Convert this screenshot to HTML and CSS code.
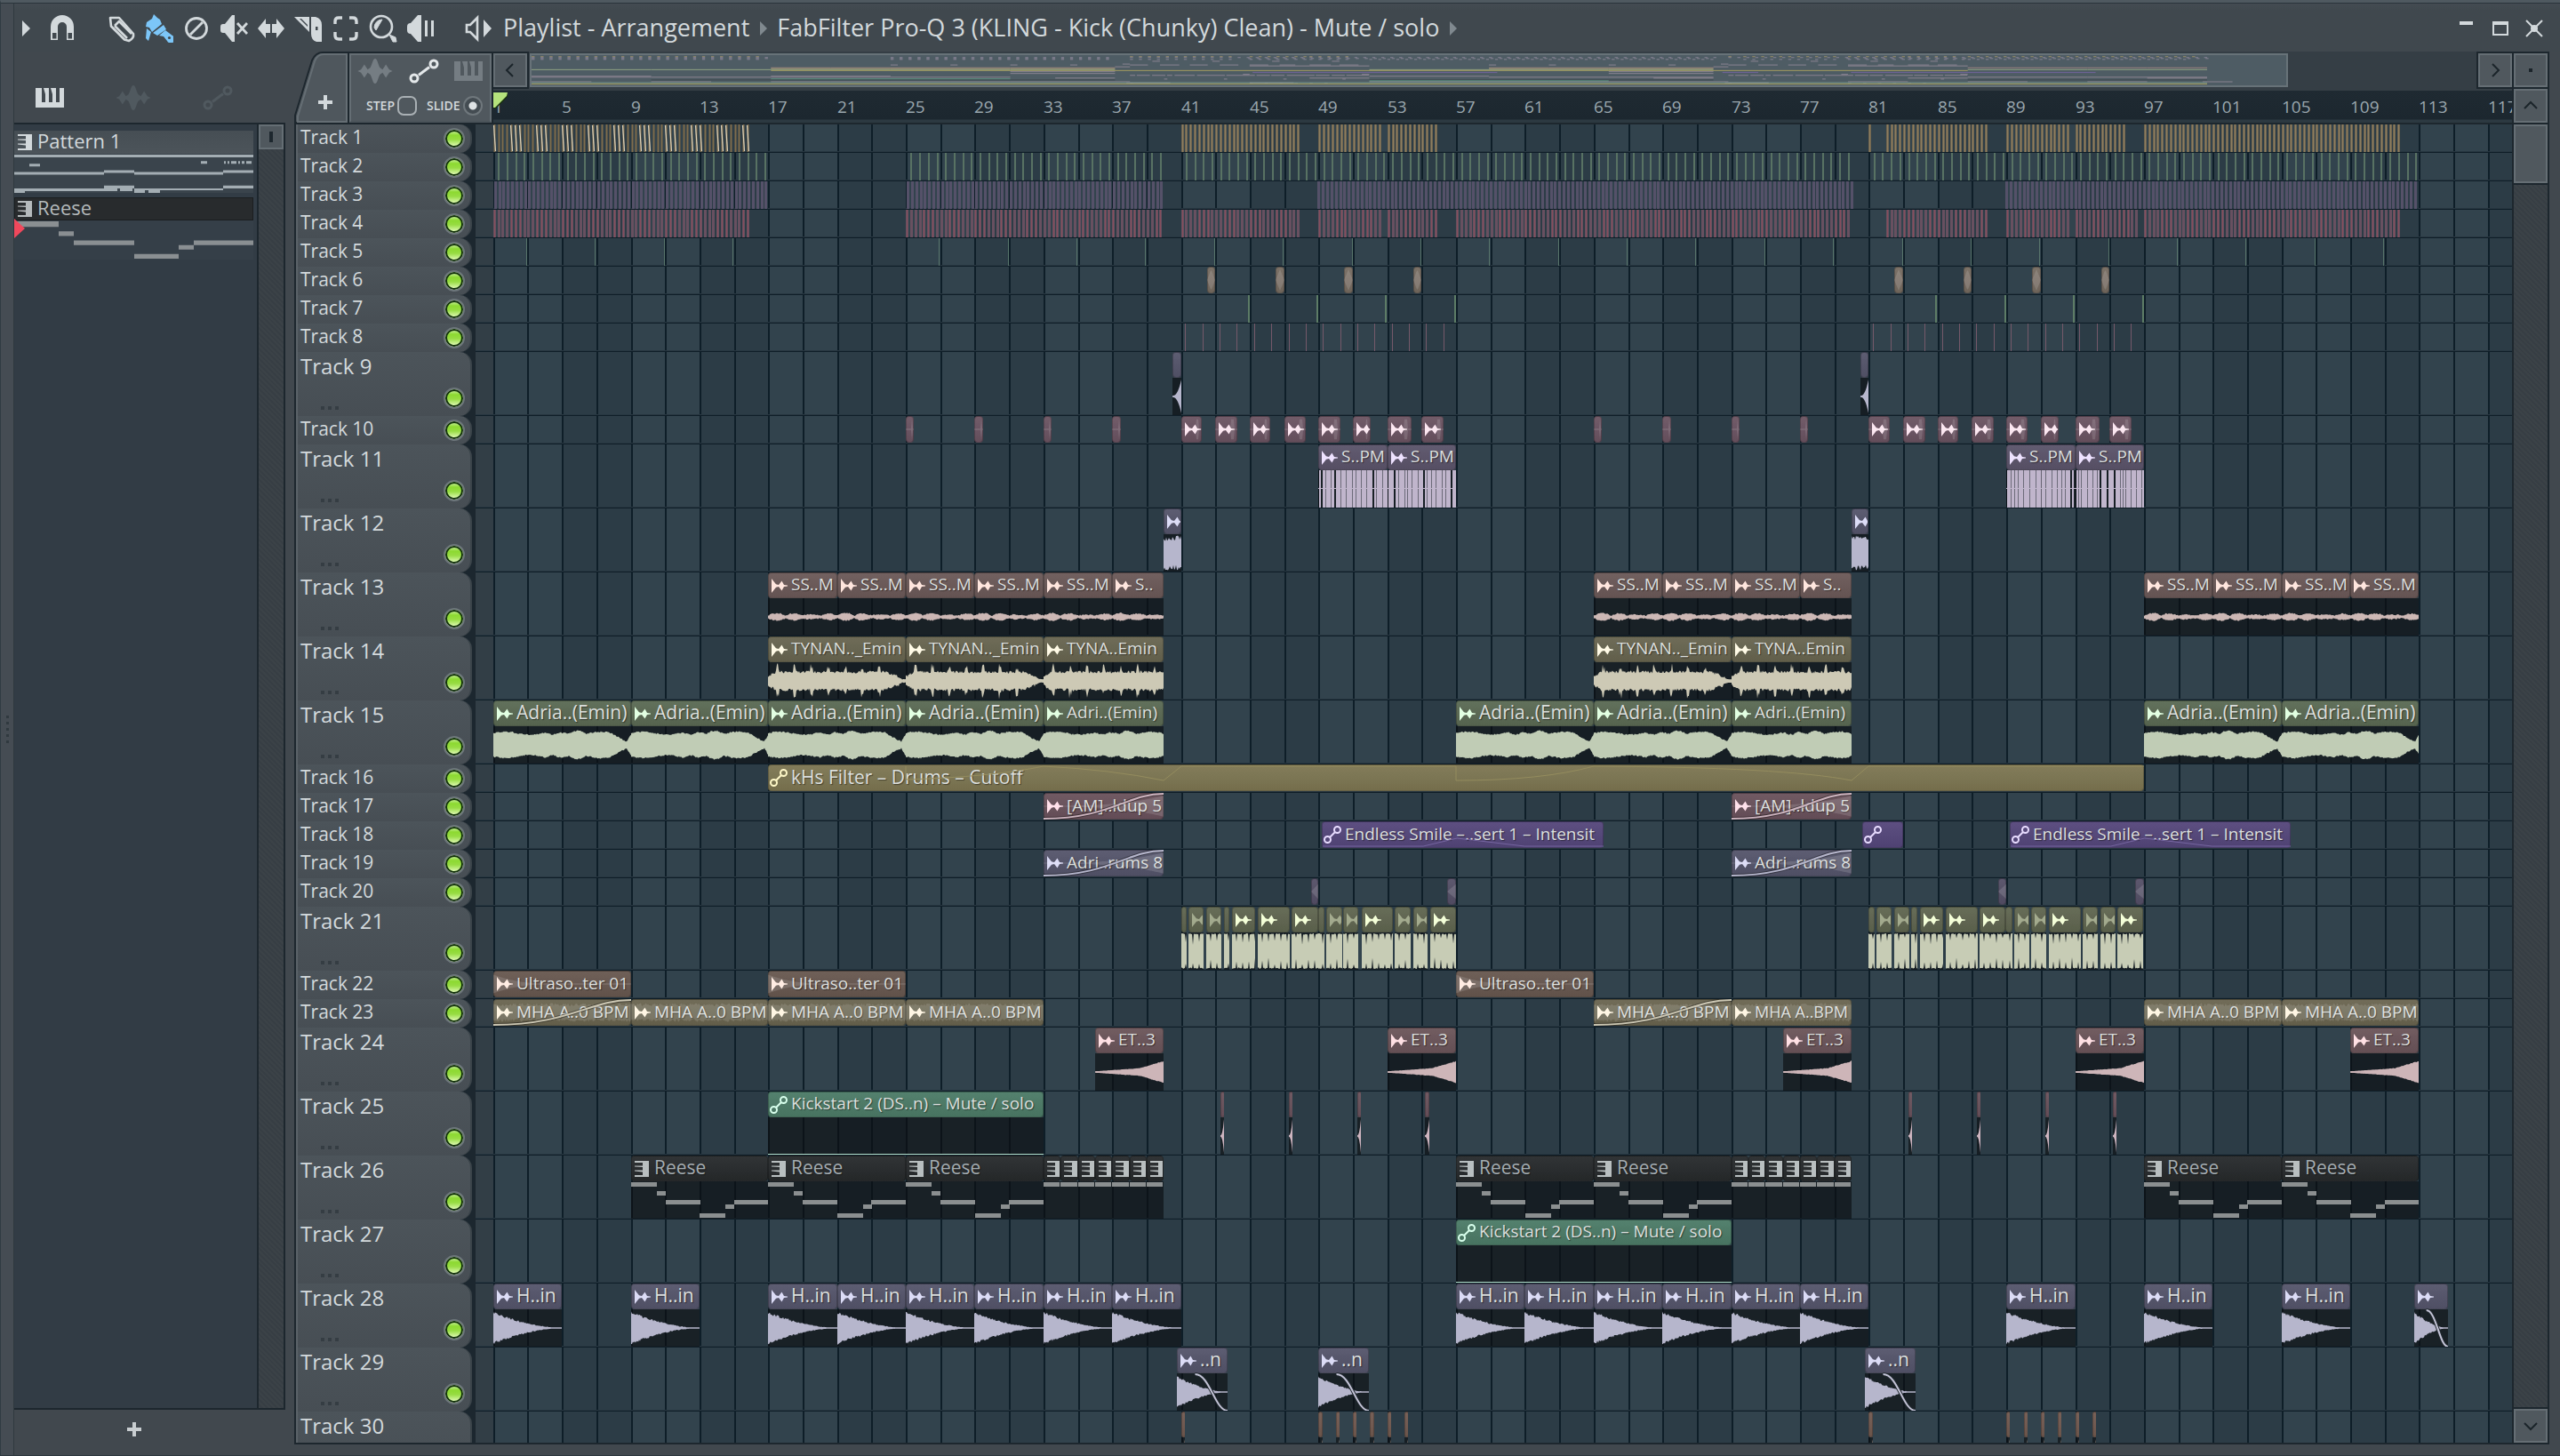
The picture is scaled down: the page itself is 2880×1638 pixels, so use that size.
FILE: index.html
```html
<!DOCTYPE html>
<html lang="en">
<head>
<meta charset="utf-8">
<title>Playlist - Arrangement</title>
<link rel="stylesheet" href="styles.css">
</head>
<body>
<svg class="defs" aria-hidden="true">
  <symbol id="i-audio" viewBox="0 0 18 16"><path d="M0 0 5 6.300 8 6.900 11.500 2.500 14 7 18 7.600V8.400L14 9 11.500 13.500 8 9.100 5 9.700 0 16Z"/></symbol>
  <symbol id="i-link" viewBox="0 0 20 20"><g fill="none" stroke="currentColor" stroke-width="2"><circle cx="15.500" cy="4.500" r="3.500"/><circle cx="4.500" cy="15.500" r="3.500"/><path d="M7 13 13 7"/></g></symbol>
  <symbol id="i-keys" viewBox="0 0 16 18"><path d="M0 0H16V18H0V16H9V12.500L0 11.500V10.500H9V7L0 6.500V5.500H9V2H0Z"/></symbol>
  <symbol id="i-piano" viewBox="0 0 32 22"><path d="M0 0H7V16H11V7L9 0H15V16H19V7L17 0H23V16H27V0H32V22H0Z"/></symbol>
  <symbol id="i-wave" viewBox="0 0 42 30"><path d="M0 15 4 13 8 7 12 13 15 11C17 9 18 0 21 0S25 9 27 11L30 13 34 7 38 13 42 15 38 17 34 23 30 17 27 19C25 21 24 30 21 30S17 21 15 19L12 17 8 23 4 17Z"/></symbol>
  <symbol id="i-auto" viewBox="0 0 34 28"><g fill="none" stroke="currentColor" stroke-width="3"><circle cx="28" cy="6" r="4"/><circle cx="6" cy="22" r="4"/><path d="M11 18.500 23 9.500"/></g></symbol>
</svg>
<div class="app">
  <div class="grip" aria-hidden="true"><i></i><i></i><i></i><i></i><i></i></div>
  <div class="window">
    <header class="titlebar">
      <button class="menu-arrow" aria-label="Menu"><svg width="10" height="18" viewBox="0 0 10 18"><path d="M0 0 9 9 0 18Z"/></svg></button>
      <button class="tool magnet" aria-label="Snap"><svg viewBox="0 0 32 32"><path fill-rule="evenodd" d="M3 29V14A13 13 0 0 1 29 14V29H21V14A5 5 0 0 0 11 14V29ZM5 21V27.500H9.500V21ZM22.500 21V27.500H27V21Z"/></svg></button>
      <button class="tool" aria-label="Draw"><svg viewBox="0 0 32 32"><g fill="none" stroke="currentColor" stroke-width="2.600" stroke-linejoin="round"><path d="M3 4 13 4 29 22Q30 27 24 30L19 28.500 4 13.500Z"/><path d="M8 13 13 8 27 22M8 13 22 27"/></g></svg></button>
      <button class="tool active" aria-label="Paint"><svg viewBox="0 0 32 32"><path d="M2 9 8 5 10 0 14 4 17 6 19 11 8 20 5 15 1 14ZM2 16 7 20 4 30 1 27ZM21 12 24 17 14 24 9 21ZM23 18 31 24A4.500 4.500 0 1 1 25 30L21 25 16 24Z"/><circle cx="27.500" cy="26.500" r="1.600" fill="#40484e"/></svg></button>
      <button class="tool" aria-label="Delete"><svg viewBox="0 0 32 32"><g fill="none" stroke="currentColor" stroke-width="2.800"><circle cx="16" cy="16" r="11.500"/><path d="M9 23 23 9"/></g></svg></button>
      <button class="tool" aria-label="Mute"><svg viewBox="0 0 32 32"><path d="M1 14Q1 11 4 11H6L14 1H17V31H14L6 21H4Q1 21 1 18Z"/><path d="M20 10 31 22M31 10 20 22" fill="none" stroke="currentColor" stroke-width="2.800"/></svg></button>
      <button class="tool" aria-label="Slip"><svg viewBox="0 0 32 32"><path d="M1 16 10 5V11H15V21H10V27ZM31 16 22 5V11H17V21H22V27Z"/></svg></button>
      <button class="tool" aria-label="Slice"><svg viewBox="0 0 32 32"><path fill-rule="evenodd" d="M0 3H17V20L14 17 0 3ZM6 5 15 14V12L8 5ZM19 3H24Q31 5 31 12V31H25Q19 29 19 22ZM24 14V18H26.500V14Z"/></svg></button>
      <button class="tool" aria-label="Select"><svg viewBox="0 0 32 32"><path d="M4 11V8Q4 4 8 4H12M20 4H24Q28 4 28 8V11M28 20V24Q28 28 24 28H20M12 28H8Q4 28 4 24V20" fill="none" stroke="currentColor" stroke-width="3.400"/></svg></button>
      <button class="tool" aria-label="Zoom"><svg viewBox="0 0 32 32"><circle cx="14" cy="14" r="12" fill="none" stroke="currentColor" stroke-width="2.600"/><path d="M6 15A9 9 0 0 1 15 6Q12 11 8 18ZM23 23 30 26 31 31 27 31Z" stroke="currentColor"/></svg></button>
      <button class="tool" aria-label="Playback"><svg viewBox="0 0 32 32"><path d="M1 14Q1 10 5 10L13 1H17V31H13L5 22Q1 22 1 18ZM21 7H24V25H21ZM28 7H31V25H28Z"/></svg></button>
      <button class="tool speaker" aria-label="Preview"><svg viewBox="0 0 32 32"><path d="M2 12V20H6L14 28V4L6 12Z" fill="none" stroke="currentColor" stroke-width="2.600"/><path d="M21 6 30 16 21 26Z"/></svg></button>
      <h1 class="crumb">Playlist - Arrangement</h1>
      <svg class="sep" width="9" height="16" viewBox="0 0 9 16"><path d="M0 0 8 8 0 16Z"/></svg>
      <span class="crumb">FabFilter Pro-Q 3 (KLING - Kick (Chunky) Clean) - Mute / solo</span>
      <svg class="sep" width="9" height="16" viewBox="0 0 9 16"><path d="M0 0 8 8 0 16Z"/></svg>
      <div class="winbtns">
        <button aria-label="Minimize"><svg viewBox="0 0 20 20"><path d="M2 2H17V6H2Z"/></svg></button>
        <button aria-label="Maximize"><svg viewBox="0 0 20 20"><path fill-rule="evenodd" d="M1 2H19V18H1ZM3 6V16H17V6Z"/></svg></button>
        <button aria-label="Close"><svg viewBox="0 0 20 20"><path d="M1 1 10 10 19 1M1 19 10 10 19 19" fill="none" stroke="currentColor" stroke-width="2"/><circle cx="10" cy="10" r="4"/></svg></button>
      </div>
    </header>
    <div class="content">
      <aside class="picker">
        <div class="picker-tabs">
          <button aria-label="Patterns" class="on"><svg width="32" height="22"><use href="#i-piano"/></svg></button>
          <button aria-label="Audio"><svg width="42" height="28"><use href="#i-wave"/></svg></button>
          <button aria-label="Automation"><svg width="34" height="28"><use href="#i-auto"/></svg></button>
        </div>
        <div class="picker-box">
          <div class="picker-list">
            <section class="pattern">
              <h2><svg width="16" height="18"><use href="#i-keys"/></svg>Pattern 1</h2>
              <svg class="preview" viewBox="0 0 269 43" preserveAspectRatio="none"><path fill="#a3adb3" d="M0 1H269V4H0ZM17 11H29V14H17ZM210 8H217V11H210ZM236 8H238V11H236ZM240 8H242V11H240ZM244 8H250V11H244ZM252 8H254V11H252ZM256 8H259V11H256ZM261 8H267V11H261ZM0 20H101V23H0ZM101 18H135V21H101ZM135 20H235V23H135ZM235 18H269V21H235ZM0 38H101V41H0ZM0 40H12V43H0ZM101 35H135V38H101ZM101 38H116V41H101ZM119 38H133V41H119ZM135 40H147V43H135ZM151 40H164V43H151ZM135 38H235V40H135ZM235 35H269V38H235Z"/></svg>
            </section>
            <section class="pattern reese">
              <h2><svg width="16" height="18"><use href="#i-keys"/></svg>Reese</h2>
              <svg class="preview" viewBox="0 0 269 43" preserveAspectRatio="none"><path fill="#8a8f92" d="M0 1H50V7H0ZM50 12H67V17H50ZM67 22H135V27H67ZM135 37H185V42H135ZM185 27H202V32H185ZM202 22H269V27H202Z"/></svg>
              <svg class="cursor" width="13" height="24" viewBox="0 0 13 24"><path d="M0 1 12 12 0 23Z" fill="#f0485c"/></svg>
            </section>
          </div>
          <div class="picker-scroll"><div class="thumb"></div></div>
        </div>
        <button class="add" aria-label="Add pattern"><svg width="16" height="16" viewBox="0 0 16 16"><path d="M6 0H10V6H16V10H10V16H6V10H0V6H6Z"/></svg></button>
      </aside>
      <main class="playlist">
        <div class="head">
          <div class="modes">
            <button class="add-track" aria-label="Add track">
              <svg class="tab-shape" width="62" height="80" viewBox="0 0 62 80"><path d="M1 80V72L20 10Q24 1 32 1H61V80Z" fill="#4f575d" stroke="#1d272e" stroke-width="2"/><path d="M4 79V73L23 11Q26 3 33 3H59V79Z" fill="none" stroke="#656e74" stroke-width="2"/></svg>
              <svg class="plus" width="16" height="16" viewBox="0 0 16 16"><path d="M6 0H10V6H16V10H10V16H6V10H0V6H6Z"/></svg>
            </button>
            <div class="mode-panel">
              <div class="mode-icons">
                <button aria-label="Clip source"><svg width="42" height="28"><use href="#i-wave"/></svg></button>
                <button aria-label="Automation clips" class="on"><svg width="34" height="28"><use href="#i-auto"/></svg></button>
                <button aria-label="Pattern clips"><svg width="32" height="22"><use href="#i-piano"/></svg></button>
              </div>
              <div class="mode-opts">
                <label for="step">STEP</label><input type="checkbox" id="step" class="step">
                <label for="slide">SLIDE</label><input type="radio" id="slide" class="slide" checked>
              </div>
            </div>
          </div>
          <div class="nav">
            <div class="overview">
              <button class="sq" aria-label="Scroll left"><svg width="18" height="18" viewBox="0 0 18 18"><path d="M12 2 5 9 12 16"/></svg></button>
              <div class="map"><svg id="map" aria-hidden="true"></svg></div>
              <button class="sq right" aria-label="Scroll right"><svg width="18" height="18" viewBox="0 0 18 18"><path d="M6 2 13 9 6 16"/></svg></button>
            </div>
            <div class="ruler" id="ruler">
              <svg class="marker" width="17" height="20" viewBox="0 0 17 20"><path d="M0 1H16V6L3 19H0Z" fill="#16310a"/><path d="M0 1H16L15 5 2 18H0Z" fill="#b5e27c"/></svg>
            </div>
          </div>
          <div class="corner">
            <button class="sq" aria-label="View"><svg width="18" height="18" viewBox="0 0 18 18"><path d="M7 7H11V11H7Z" class="solid"/></svg></button>
            <button class="sq" aria-label="Scroll up"><svg width="18" height="18" viewBox="0 0 18 18"><path d="M2 12 9 5 16 12"/></svg></button>
          </div>
        </div>
        <div class="tracks">
          <div class="rows" id="rows"><svg class="grid" id="grid" aria-hidden="true"></svg></div>
          <div class="vscroll">
            <div class="thumb"></div>
            <button class="sq" aria-label="Scroll down"><svg width="18" height="18" viewBox="0 0 18 18"><path d="M2 6 9 13 16 6"/></svg></button>
          </div>
        </div>
      </main>
    </div>
  </div>
</div>
<script src="script.js"></script>
</body>
</html>
```
FILE: styles.css
```css
:root {
  --bg: #41484e;
  --line: #1d272e;
  --btn: #50585e;
  --edge: #656e74;
  --ink: #d3d9dc;
  --ui: "Open Sans", sans-serif;
}
* { box-sizing: border-box; margin: 0; padding: 0; }
body { background: var(--bg); color: var(--ink); font-family: var(--ui); overflow: hidden; }
button { background: none; border: 0; color: inherit; font: inherit; display: flex; align-items: center; justify-content: center; }
svg { fill: currentColor; display: block; flex: none; }
.defs { position: absolute; width: 0; height: 0; }
.app { display: flex; height: 100vh; border-top: 3px solid #4f5960; border-left: 1px solid #303b42; border-bottom: 1px solid #2d383f; }
.grip { width: 15px; background: #454c53; border-right: 1px solid #2f393f; border-top: 1px solid #2a343b; display: flex; flex-direction: column; align-items: center; justify-content: center; gap: 4px; }
.grip i { width: 3px; height: 3px; background: #30393f; }
.window { flex: 1; min-width: 0; display: flex; flex-direction: column; border-top: 1px solid #2a343b; }

.titlebar { height: 54px; display: flex; align-items: center; padding: 2px 19px 0 9px; background: linear-gradient(#444b52, #40484e 8px); }
.menu-arrow { width: 24px; justify-content: flex-start; }
.tool { width: 42px; height: 42px; }
.tool svg { width: 32px; height: 32px; }
.magnet { margin-right: 25px; }
.speaker { margin: 0 6px 0 24px; }
.active { color: #7cc6f8; }
.crumb { font-size: 27px; font-weight: 400; line-height: 36px; white-space: nowrap; margin-bottom: 2px; }
.sep { color: #80898f; margin: 0 10px 0 12px; }
.winbtns { margin-left: auto; display: flex; gap: 18px; }
.winbtns button, .winbtns svg { width: 20px; height: 20px; }

.content { flex: 1; min-height: 0; display: flex; gap: 10px; padding-right: 12px; }
.picker { width: 305px; display: flex; flex-direction: column; }
.picker-tabs { height: 80px; display: grid; grid-template-columns: 80px 108px 82px; padding-top: 24px; color: #50595f; }
.picker-tabs .on { color: var(--ink); }
.picker-box { flex: 1; display: flex; border: 2px solid var(--line); border-left: 0; }
.picker-list { flex: 1; background: #323c45; padding: 7px 4px 0 0; border-right: 2px solid var(--line); display: flex; flex-direction: column; gap: 5px; }
.pattern { position: relative; }
.pattern h2 { height: 26px; display: flex; align-items: center; gap: 6px; padding: 0 0 4px 4px; font: 400 22px/22px var(--ui); background: linear-gradient(#464e54, #4c545a); }
.pattern h2 svg { position: relative; top: 2px; }
.reese h2 { background: #282b2d; border: 1px solid #1b1e20; padding-left: 3px; color: #b5babc; }
.preview { width: 100%; height: 44px; background: #3a444c; }
.reese .preview { background: #353f48; }
.cursor { position: absolute; left: 0; top: 23px; }
.picker-scroll { width: 28px; }
.picker-scroll, .vscroll { background: repeating-linear-gradient(45deg, #3b4247 0 2px, #373e44 2px 4px); }
.picker-scroll .thumb { height: 28px; border: 2px solid var(--edge); background: var(--btn) linear-gradient(#1d272e, #1d272e) center / 4px 12px no-repeat; }
.add { height: 43px; margin-bottom: 8px; padding-right: 35px; color: #c8cdd0; }

.playlist { flex: 1; min-width: 0; display: flex; flex-direction: column; margin-bottom: 12px; }
.head { height: 80px; display: flex; }
.modes { width: 224px; display: flex; }
.add-track { position: relative; width: 62px; height: 80px; }
.tab-shape { position: absolute; inset: 0; }
.plus { position: relative; top: 17px; left: 4px; }
.mode-panel { flex: 1; margin: 2px 2px 0 0; background: var(--btn); border: 2px solid var(--edge); border-bottom-color: #4b545a; outline: 2px solid var(--line); display: flex; flex-direction: column; }
.mode-icons { height: 36px; display: flex; align-items: center; justify-content: space-between; padding: 0 8px 0 6px; color: #757d83; }
.mode-icons .on { color: #e4e8ea; }
.mode-opts { flex: 1; display: flex; align-items: center; padding: 4px 8px 0 17px; font-size: 14px; font-weight: 600; line-height: 20px; }
.mode-opts label { flex: none; }
.step { appearance: none; width: 22px; height: 22px; border: 2px solid #a9b0b4; border-radius: 7px; margin: 0 11px 0 3px; }
.slide { appearance: none; width: 22px; height: 22px; flex: none; border: 2px solid #6f777c; border-radius: 50%; margin-left: auto; background: radial-gradient(circle, #dfe3e5 0 4px, #444c52 5px); }
.nav { flex: 1; min-width: 0; display: flex; flex-direction: column; }
.overview { height: 44px; display: flex; padding: 2px 0; background: #353e45; }
.sq { width: 38px; height: 38px; flex: none; background: var(--btn); border: 2px solid var(--edge); outline: 2px solid var(--line); }
.sq path { fill: none; stroke: #1b242a; stroke-width: 2; }
.sq .solid { fill: #1b242a; stroke: none; }
.map { width: 1978px; height: 38px; margin-left: 3px; background: #4e5c64; border: 2px solid #677278; overflow: hidden; }
.map svg { width: 100%; height: 34px; }
.overview .right { margin-left: auto; }
.ruler { height: 36px; position: relative; overflow: hidden; background: linear-gradient(#1f2a32, #1c272f 32px, #2c3941 33px); font: 400 19px/36px var(--ui); color: #9aa7ae; }
.ruler span { position: absolute; top: 0; }
.marker { position: absolute; left: 0; top: 1px; }
.corner { width: 42px; padding: 2px 0 0 2px; display: flex; flex-direction: column; gap: 2px; background: var(--line); }

.tracks { flex: 1; min-height: 0; display: flex; border: 2px solid var(--line); border-right: 0; }
.rows { flex: 1; min-width: 0; position: relative; overflow: hidden; border-left: 2px solid #5a6268; background: #1c272f; }
.vscroll { width: 42px; border: solid var(--line); border-width: 0 2px; display: flex; flex-direction: column; justify-content: space-between; }
.vscroll .thumb { height: 66px; background: var(--btn); border: 2px solid var(--edge); outline: 2px solid var(--line); }
.grid { position: absolute; left: 200px; top: 0; width: calc(100% - 200px); height: 100%; }
.row { position: relative; display: flex; height: 32px; }
.row.tall { height: 72px; }
.th { width: 196px; height: 100%; margin-right: 4px; padding-left: 3px; border-radius: 0 14px 14px 0; background: linear-gradient(#4c545a, #474e54); position: relative; display: flex; align-items: flex-start; justify-content: space-between; border-right: 2px solid #3a4349; }
.th label { font-size: 21px; line-height: 28px; }
.th.big label { font-size: 24px; line-height: 32px; }
.led { appearance: none; width: 24px; height: 24px; margin: 4px 6px 0 0; border-radius: 50%; border: 2px solid #6d767b; background: linear-gradient(#b4e878 3px, #8cd930 6px, #97dc43 11px, #dcf8ae 18px); box-shadow: inset 0 0 0 2px #12300c; }
.tall .led { margin-top: 40px; }
.dots { position: absolute; left: 26px; bottom: 7px; width: 20px; height: 4px; background: repeating-linear-gradient(90deg, #353d43 0 4px, transparent 4px 8px); }
.lane { flex: 1; min-width: 0; position: relative; border-bottom: 1px solid #0f1e28; box-shadow: inset 0 -1px #273640; }
.clips { position: absolute; left: 20px; top: 0; right: 0; bottom: 0; overflow: hidden; }
.stripes { position: absolute; inset: 0; width: 100%; height: 100%; }
.clip { position: absolute; top: 0; bottom: 0; overflow: hidden; }
.ch { height: 30px; display: flex; align-items: center; gap: 4px; padding-left: 3px; border: 1px solid rgba(0,0,0,.22); border-radius: 4px; background-image: linear-gradient(rgba(255,255,255,.05), rgba(0,0,0,.06)); font: 400 19px/26px var(--ui); color: #dcdfdd; white-space: nowrap; overflow: hidden; }
.ch span { padding-bottom: 2px; text-shadow: 1px 1px 1px rgba(0,0,0,.45); }
.tall .ch { height: 29px; }
.tall .ch span { padding-bottom: 4px; }
.roomy .ch { font-size: 21px; }
.snug .ch { font-size: 18px; }
.ch .dim { opacity: .45; }
.clip.link .ch { padding-left: 1px; }
.clip.pat .ch { color: #a5adb2; gap: 6px; }
.bodyw { position: absolute; left: 0; top: 29px; width: 100%; height: 42px; background: rgba(11, 14, 17, .64); }
.curve { position: absolute; left: 0; top: 0; }
```
FILE: script.js
```js
const BAR = 19.345;
const x = bar => Math.round((bar - 1) * BAR - 0.2);

let seed = 7;
const rnd = () => (seed = (seed * 16807) % 2147483647) / 2147483647;

/* Mirrors an amplitude envelope around the middle of the clip body. */
function envelope(w, fn, color, mid = 21) {
  let top = '', bottom = '';
  for (let i = 0; i <= w; i++) {
    top += `L${i} ${(mid - fn(i / w, i) * (mid - 1)).toFixed(1)}`;
    bottom = `L${i} ${(mid + fn(i / w, i) * (mid - 1)).toFixed(1)}` + bottom;
  }
  return `<path fill="${color}" d="M0 ${mid}${top}${bottom}Z"/>`;
}

const waves = {
  thin: (w, c) => envelope(w, (t, i) => 0.04 + 0.1 * Math.abs(Math.sin(i / 6.2)) * (0.4 + Math.abs(Math.sin(i / 24 + 1))) + rnd() * 0.07, c),
  spiky: (w, c) => envelope(w, (t, i) => {
    const u = i / 155;
    const base = u < 0.06 ? 0.15 + u * 5 : u > 0.97 ? 0.08 : u > 0.86 ? 0.38 - (u - 0.86) * 2.6 : 0.42;
    const spike = (i + 9) % 19 < 3 && u < 0.85 ? 0.36 * rnd() + 0.1 : 0;
    return base + rnd() * 0.16 * (u > 0.95 ? 0.2 : 1) + spike;
  }, c),
  pad: (w, c) => envelope(w, (t, i) => {
    const u = i / 155;
    let a = 0.62 + 0.08 * Math.sin(u * 18);
    if (u > 0.38 && u < 0.48) a -= 0.15 * Math.sin((u - 0.38) * 31);
    if (u > 0.55 && u < 0.67) a += 0.22 * Math.sin((u - 0.55) * 26);
    if (u > 0.85) a -= (u - 0.85) * 3.3;
    if (u > 0.97) a = 0.2 + (u - 0.97) * 12;
    return a + rnd() * 0.08;
  }, c),
  full: (w, c) => envelope(w, () => 0.68 + rnd() * 0.3, c),
  decay: (w, c) => envelope(w, t => Math.max(0.04, 0.86 * Math.pow(1 - t, 1.75) + (1 - t) * (rnd() - 0.5) * 0.16), c),
  rise: (w, c) => envelope(w, t => Math.max(0.04, (t < 0.65 ? 0.04 + t * 0.24 : 0.2 + (t - 0.65) * 1.1) + t * rnd() * 0.05), c),
  steep: (w, c) => envelope(w, t => 0.04 + 0.9 * Math.pow(t, 2.4), c),
  cuts: (w, c) => envelope(w, (t, i) => (i % 7 === 5 ? 0.35 + rnd() * 0.4 : 0.93 + rnd() * 0.07), c),
  blocks: (w, c) => {
    let s = `<rect y="20" width="${w}" height="1" fill="${c}"/>`;
    for (let i = 1; i < w - 1;) {
      const bw = 2 + Math.floor(rnd() * 5);
      s += `<rect x="${i}" y="0" width="${Math.min(bw, w - i)}" height="42" fill="${c}"/>`;
      i += bw;
      if (rnd() > 0.72) i += 2;
      else { s += `<rect x="${i}" width="1" height="42" fill="${c}" opacity=".5"/>`; i += 1; }
    }
    return s;
  },
  reese: w => [[0, 1, .1875], [.1875, 11, .0625], [.25, 21, .25], [.5, 36, .1875], [.6875, 26, .0625], [.75, 21, .25]]
    .map(([a, y, l]) => `<rect x="${Math.round(a * w)}" y="${y}" width="${Math.round(l * w)}" height="5" fill="#8b8f90"/>`).join(''),
  bar: w => `<rect y="1" width="${w - 1}" height="5" fill="#8b8f90"/>`,
  floor: w => `<rect y="41" width="${w}" height="1" fill="#b4e0cc"/>`
};

const kinds = {
  tan6: { c: '#756a60' },
  steel: { c: '#54546a', w: '#b6b6cc', i: '#dcdcf6' },
  rose10: { c: '#6a5361', i: '#fbe6f0' },
  violet: { c: '#5a5369', w: '#c0b5cc', i: '#eee2ff' },
  brown: { c: '#6a5857', w: '#cdb8b5', i: '#ffe6de' },
  olive: { c: '#67644f', w: '#cdc9b5', i: '#fffae6' },
  green: { c: '#5a6953', w: '#c0ccb5', i: '#e2ffe2' },
  yellow: { c: '#7c7551', i: '#fff8c8' },
  rose: { c: '#69515b', w: '#cdb4bf', i: '#ffe0ea' },
  purple: { c: '#54467a', i: '#e8dcff' },
  moss: { c: '#5f654f', w: '#c7ccb5', i: '#f4ffd8' },
  clay: { c: '#67574f', i: '#ffeadf' },
  khaki: { c: '#69644f', w: '#cdc8b4', i: '#fff5e0' },
  mauve: { c: '#6a5459', w: '#cdb5b8', i: '#ffe0e4' },
  teal: { c: '#4b7a66', i: '#d8ffec' },
  pat: { c: '#26292b', i: '#b9bfc0' },
  dusk: { c: '#544f66' },
  rust: { c: '#71594f', w: '#cdb5a5' }
};

/* Track contents: [first bar, end bar, label, options] */
const rep = (offsets, list) => offsets.flatMap(o => list.map(([a, b, l, q]) => [a + o, b + o, l, q]));
const T = {
  6: ['tan6', rep([0, 40], [[42.5, 43], [46.5, 47], [50.5, 51], [54.5, 55]])],
  9: ['steel', [[40.5, 41], [80.5, 81]], 'steep'],
  10: ['rose10', [...[25, 29, 33, 37, 65, 69, 73, 77].map(b => [b, b + .48]),
    ...rep([0, 40], [[41, 42.2, ''], [43, 44.3, ''], [45, 46.2, ''], [47, 48.25, ''], [49, 50.25, ''], [51, 52.05, ''], [53, 54.42, ''], [55, 56.28, '']])]],
  11: ['violet', rep([0, 40], [[49, 53, 'S..PM'], [53, 57, 'S..PM']]), 'blocks'],
  12: ['steel', [[40, 41, ''], [80, 81, '']], 'full'],
  13: ['brown', [...[17, 21, 25, 29, 33, 65, 69, 73, 97, 101, 105, 109].map(b => [b, b + 4, 'SS..M']), [37, 40, 'S..'], [77, 80, 'S..']], 'thin'],
  14: ['olive', [[17, 25, 'TYNAN.._Emin'], [25, 33, 'TYNAN.._Emin'], [33, 40, 'TYNA..Emin'], [65, 73, 'TYNAN.._Emin'], [73, 80, 'TYNA..Emin']], 'spiky'],
  15: ['green', [...[1, 9, 17, 25, 57, 65, 97, 105].map(b => [b, b + 8, 'Adria..(Emin)', 'roomy']), [33, 40, 'Adri..(Emin)'], [73, 80, 'Adri..(Emin)']], 'pad'],
  16: ['yellow', [[17, 97, 'kHs Filter – Drums – Cutoff', 'link roomy cutoff']]],
  17: ['rose', [[33, 40, '[AM]..ldup 5', 'fadein'], [73, 80, '[AM]..ldup 5', 'fadein']]],
  18: ['purple', [[49.2, 65.55, 'Endless Smile –..sert 1 – Intensit', 'link smile'], [80.6, 83, '', 'link'], [89.2, 105.55, 'Endless Smile –..sert 1 – Intensit', 'link smile']]],
  19: ['steel', [[33, 40, 'Adri..rums 8', 'fadein'], [73, 80, 'Adri..rums 8', 'fadein']]],
  20: ['dusk', rep([0, 40], [[48.55, 49], [56.5, 57]])],
  21: ['moss', rep([41, 81], [[0, .35], [.46, 1.33, '', 'dim'], [1.48, 2.37, '', 'dim'], [2.48, 2.83], [2.98, 4.33, ''], [4.48, 6.35, ''], [6.44, 7.96, ''], [7.96, 8.35], [8.46, 9.36, '', 'dim'], [9.44, 10.33, '', 'dim'], [10.49, 12.34, ''], [12.42, 13.34, '', 'dim'], [13.49, 14.36, '', 'dim'], [14.47, 15.97, '']]), 'cuts'],
  22: ['clay', [1, 17, 57].map(b => [b, b + 8, 'Ultraso..ter 01'])],
  23: ['khaki', [[1, 9, 'MHA A..0 BPM', 'fadein'], ...[9, 17, 25, 97, 105].map(b => [b, b + 8, 'MHA A..0 BPM']), [65, 73, 'MHA A..0 BPM', 'fadein'], [73, 80, 'MHA A..BPM', 'snug']]],
  24: ['mauve', [[36, 40], [53, 57], [76, 80], [93, 97], [109, 113]].map(([a, b]) => [a, b, 'ET..3']), 'rise'],
  25: ['rose', rep([0, 40], [[43.28, 43.5], [47.28, 47.5], [51.25, 51.47], [55.2, 55.42]]), 'steep', [[17, 33, 'Kickstart 2 (DS..n) – Mute / solo']]],
  26: ['pat', [...[9, 17, 25, 57, 65, 97, 105].map(b => [b, b + 8, 'Reese', 'pat roomy']), ...[33, 34, 35, 36, 37, 38, 39, 73, 74, 75, 76, 77, 78, 79].map(b => [b, b + 1, '', 'pat one'])], 'reese'],
  27: ['teal', [], 'floor', [[57, 73, 'Kickstart 2 (DS..n) – Mute / solo']]],
  28: ['steel', [...[1, 9, 17, 21, 25, 29, 33, 37, 57, 61, 65, 69, 73, 77, 89, 97, 105].map(b => [b, b + 4, 'H..in', 'roomy']), [112.7, 114.7, '', 'fadeout']], 'decay'],
  29: ['steel', [[40.76, 43.7], [49, 51.95], [80.76, 83.7]].map(([a, b]) => [a, b, '..n', 'fadeout roomy']), 'decay'],
  30: ['rust', rep([0, 40], [[41, 41.22], [49, 49.22], [50, 50.22], [51, 51.22], [52, 52.22], [53, 53.22], [54, 54.22]]), 'steep']
};

/* Drum tracks: runs of very short clips. */
const S = {
  1: { runs: [[1, 16], [41, 48], [49, 52.7], [53, 55.9], [81, 81.2], [82, 88], [89, 92.7], [93, 96], [97, 112]], step: .25, w: 3, c: '#6f644f', c2: '#8d7e60' },
  2: { runs: [[1, 17], [25, 40], [41, 80], [81, 112.9]], step: .5, phase: .28, w: 2, c: '#587263' },
  3: { runs: [[1, 17], [25, 40], [48.9, 80], [88.9, 112.9]], step: .25, phase: .05, w: 3, c: '#555169' },
  4: { runs: [[1, 16], [25, 39.9], [41, 47.9], [49, 52.7], [53, 55.9], [57, 80], [82, 88], [89, 92.7], [93, 96.7], [97, 111.9]], step: .25, w: 3, c: '#685060', c2: '#864e5c' },
  5: { runs: [[2.92, 16], [26.92, 80], [82.92, 112]], step: 4, w: 1, c: '#58756b' },
  7: { runs: [[44.88, 57], [84.88, 97]], step: 4, w: 2, c: '#5d7c66' },
  8: { runs: [[41.25, 57], [81.25, 97]], step: 1, w: 1, c: '#75596a' }
};

const tall = n => [9, 11, 12, 13, 14, 15, 21].includes(n) || n >= 24;

function stripes(n) {
  const s = S[n];
  let out = '';
  s.runs.forEach(([a, b], r) => {
    for (let i = 0, p = a + (s.phase || 0); p < b - 0.02; i++, p = a + (s.phase || 0) + i * s.step) {
      const X = x(p), hot = [4, 5, 0].includes(i % 6);
      if (n === 1 && r === 0) {
        out += `<rect x="${X}" width="3" height="31" fill="#565347"/><rect x="${X + 1}" width="1" height="31" fill="#7d6d4e"/>`;
        if (hot) out += `<path d="M${X + .5} 1 ${X + 2.5} 30" stroke="#ddd3bc" stroke-width="1.200" fill="none"/>`;
      } else {
        out += `<rect x="${X}" width="${s.w}" height="31" fill="${s.c}"/>`;
        if (n === 1) out += `<rect x="${X + 1}" width="1" height="31" fill="${s.c2}"/>`;
        if (n === 4 && hot) out += `<rect x="${X + 1}" width="1" height="31" fill="${s.c2}"/>`;
      }
    }
  });
  return `<svg class="stripes">${out}</svg>`;
}

function curves(opt, w, color) {
  if (opt.includes('fadein')) {
    const d = `M0 29C${w * .55} 29 ${w * .7} 1 ${w} 1`;
    return `<svg class="curve" width="${w}" height="31"><path d="${d}" fill="none" stroke="#000" stroke-opacity=".35" stroke-width="4"/><path d="${d}" fill="none" stroke="${color}" stroke-width="2"/></svg>`;
  }
  if (opt.includes('fadeout')) {
    const h = w * .36, d = `M${h} 30C${w * .65} 30 ${w * .75} 71 ${w} 71`;
    return `<svg class="curve" width="${w}" height="72"><path d="${d}" fill="none" stroke="#222a30" stroke-width="4"/><path d="${d}" fill="none" stroke="#c3c3d6" stroke-width="2"/></svg>`;
  }
  if (opt.includes('cutoff')) {
    const at = b => x(b) - x(17);
    const d = `M${at(25)} 2V17Q${at(30)} 14 ${at(33)} 2Q${at(37)} 6 ${at(40)} 18L${at(41)} 2H${at(57)}V18Q${at(62)} 18 ${at(65)} 2Q${at(76)} 3 ${at(80)} 18L${at(81)} 2H${at(97)}`;
    return `<svg class="curve" width="${w}" height="31"><path d="${d}" fill="none" stroke="#948c5e"/></svg>`;
  }
  if (opt.includes('smile')) {
    return `<svg class="curve" width="${w}" height="31"><path d="M1 28H${w * .36}L${w * .48} 19 ${w * .72} 28H${w}" fill="none" stroke="#7565a0"/></svg>`;
  }
  return '';
}

/* Faint waveforms behind the labels of the low tracks. */
const ghosts = {
  khaki: w => envelope(w, () => .5 + rnd() * .25, '#fff', 15),
  clay: w => envelope(w, t => t < .35 ? .7 * Math.pow(1 - t / .35, 2) + .05 : .05, '#fff', 15),
  rose: w => envelope(w, t => .04 + .8 * Math.pow(t, 3), '#fff', 15),
  steel: w => envelope(w, t => .04 + .8 * Math.pow(t, 3), '#fff', 15),
  tan6: w => envelope(w, t => .85 * (1 - Math.abs(t - .5) * 2), '#fff', 15),
  rose10: w => envelope(w, t => t > .7 && t < .85 ? .8 : .05, '#fff', 15),
  dusk: w => envelope(w, t => .6 * t, '#fff', 15)
};

function clip(kindName, [a, b, label, opt = ''], wave, isTall) {
  const k = kinds[kindName], left = x(a), w = Math.max(x(b) - left, 4);
  const isPat = opt.includes('pat'), link = opt.includes('link');
  const names = ['clip', ...opt.split(' ').filter(o => ['pat', 'link', 'roomy', 'snug'].includes(o))].join(' ');
  const id = isPat ? 'i-keys' : link ? 'i-link' : 'i-audio';
  const size = isPat ? 'width="16" height="18"' : link ? 'width="20" height="20"' : 'width="18" height="16"';
  const icon = label === undefined ? '' : `<svg ${size} style="color:${k.i}" class="${opt.includes('dim') ? 'dim' : ''}"><use href="#${id}"/></svg>`;
  const fn = opt.includes('one') ? waves.bar : waves[wave];
  const body = isTall ? `<svg class="bodyw">${fn(w, k.w || '#ccc')}</svg>` : '';
  const ghost = !isTall && ghosts[kindName] ? `<svg class="curve" width="${w}" height="30" opacity=".13">${ghosts[kindName](w)}</svg>` : '';
  return `<div class="${names}" style="left:${left}px;width:${w}px">` +
    `<div class="ch" style="background-color:${k.c}">${icon}${label ? `<span>${label}</span>` : ''}</div>${body}${ghost}${curves(opt, w, k.w)}</div>`;
}

const rows = document.getElementById('rows');
let html = '';
for (let n = 1; n <= 30; n++) {
  const t = T[n], big = tall(n);
  let clips = S[n] ? stripes(n) : '';
  if (t) {
    clips += t[1].map(c => clip(t[0], c, t[2], big)).join('');
    if (t[3]) clips += t[3].map(c => clip('teal', [...c, 'link'], 'floor', true)).join('');
  }
  html += `<div class="row ${big ? 'tall' : ''}"><div class="th ${big ? 'big' : ''}"><label for="t${n}">Track ${n}</label>` +
    `<input type="checkbox" class="led" id="t${n}" checked>${big ? '<span class="dots"></span>' : ''}</div>` +
    `<div class="lane"><div class="clips">${clips}</div></div></div>`;
}
rows.insertAdjacentHTML('beforeend', html);

/* Shading alternates every four bars, with a line every two. */
let g = '<rect width="20" height="100%" fill="#323e46"/>';
for (let b = 1; b < 160; b += 4) g += `<rect x="${x(b) + 20}" width="${x(b + 4) - x(b)}" height="100%" fill="${b % 8 === 1 ? '#32434d' : '#2c3c46'}"/>`;
for (let b = 1; b < 160; b += 2) g += `<rect x="${x(b) + 20}" width="2" height="100%" fill="#0e1e28"/>`;
document.getElementById('grid').innerHTML = g;

const ruler = document.getElementById('ruler');
let marks = '';
for (let b = 1; b <= 117; b += 4) marks += `<span style="left:${x(b)}px">${b}</span>`;
ruler.insertAdjacentHTML('afterbegin', marks);

/* Overview strip */
const mx = b => Math.round((b - 1) * 16.83 * 10) / 10;
let m = '';
for (let n = 1; n <= 30; n++) {
  const y = Math.round(n * 1.05 * 10) / 10;
  const put = (a, b, c) => { m += `<rect x="${mx(a)}" y="${y}" width="${Math.max(mx(b) - mx(a), 2)}" height="1.200" fill="${c}" opacity=".8"/>`; };
  if (S[n] && n < 5) S[n].runs.forEach(([a, b]) => { for (let p = a; p < b; p += .6) put(p, p + .2, n === 1 ? '#a09468' : '#8a8596'); });
  if (T[n]) {
    T[n][1].forEach(([a, b]) => put(a, b, { yellow: '#a89f5e', purple: '#7664a0', pat: '#3d464b', teal: '#5fa085', green: '#93a583', olive: '#a09a72', brown: '#a08782' }[T[n][0]] || '#8c8494'));
    (T[n][3] || []).forEach(([a, b]) => put(a, b, '#5fa588'));
  }
}
m += `<rect y="32" width="${mx(113)}" height="1" fill="#a39c5e"/><rect y="30.500" width="${mx(113)}" height="1" fill="#78988c"/>`;
document.getElementById('map').innerHTML = m;
```
